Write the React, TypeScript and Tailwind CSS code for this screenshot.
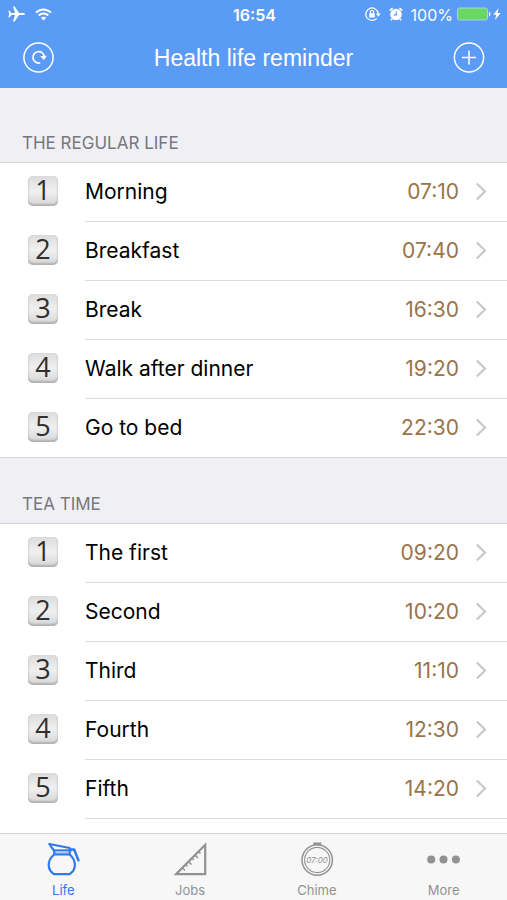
import { useState } from 'react';
import type { ReactNode } from 'react';
import clsx from 'clsx';

interface Reminder {
  name: string;
  time: string;
}

interface Section {
  title: string;
  reminders: Reminder[];
}

const SECTIONS: Section[] = [
  {
    title: 'THE REGULAR LIFE',
    reminders: [
      { name: 'Morning', time: '07:10' },
      { name: 'Breakfast', time: '07:40' },
      { name: 'Break', time: '16:30' },
      { name: 'Walk after dinner', time: '19:20' },
      { name: 'Go to bed', time: '22:30' },
    ],
  },
  {
    title: 'TEA TIME',
    reminders: [
      { name: 'The first', time: '09:20' },
      { name: 'Second', time: '10:20' },
      { name: 'Third', time: '11:10' },
      { name: 'Fourth', time: '12:30' },
      { name: 'Fifth', time: '14:20' },
    ],
  },
];

function PlaneIcon() {
  return (
    <svg width="17" height="16" viewBox="0 0 17 16" fill="currentColor" aria-hidden="true">
      <path d="M17 8c0 .7-.9 1.1-2 1.1h-4L6.700 15.500H5l2-6.400H3.300L1.700 11.200H.3L1.200 8 .3 4.800h1.400l1.600 2.100H7L5 .5h1.700L11 6.900h4c1.100 0 2 .4 2 1.100z" />
    </svg>
  );
}

function WifiIcon() {
  return (
    <svg width="17" height="13" viewBox="0 0 17 13" fill="none" stroke="currentColor" strokeWidth="2" aria-hidden="true">
      <path d="M1 4.600C5.200.3 11.800.3 16 4.600" />
      <path d="M3.700 7.500c2.700-2.700 6.900-2.700 9.600 0" />
      <path d="M8.500 12.500L5.800 9.800c1.500-1.400 3.900-1.400 5.400 0z" fill="currentColor" stroke="none" />
    </svg>
  );
}

function RotationLockIcon() {
  return (
    <svg width="16" height="14" viewBox="0 0 16 14" fill="none" stroke="currentColor" aria-hidden="true">
      <path d="M11.700 11.300A6.200 6.200 0 1 1 13.200 6.500" strokeWidth="1.200" />
      <path d="M10.800 6.500h5l-2.500 3.200z" fill="currentColor" stroke="none" />
      <rect x="4.200" y="6.200" width="5.600" height="4.200" rx=".5" fill="currentColor" stroke="none" />
      <path d="M5.400 6.500V5a1.600 1.600 0 0 1 3.200 0v1.500" strokeWidth="1.100" />
    </svg>
  );
}

function AlarmIcon() {
  return (
    <svg width="14" height="14" viewBox="0 0 14 14" aria-hidden="true">
      <circle cx="7" cy="7.500" r="5.800" fill="currentColor" />
      <path d="M.8 3.600L3.600 1.100M13.200 3.600L10.400 1.100M3 12l-1 1.300M11 12l1 1.300" stroke="currentColor" strokeWidth="1.700" />
      <path d="M7.300 4.400v3.500H4.700" fill="none" stroke="#5a9bf5" strokeWidth="1.100" />
    </svg>
  );
}

function BatteryIcon() {
  return (
    <svg width="34" height="14" viewBox="0 0 34 14" aria-hidden="true">
      <rect x=".5" y="1" width="30" height="12" rx="2" fill="#68d763" stroke="#a9d3e8" />
      <path d="M32 4.700c1.900.6 1.900 4 0 4.600z" fill="#fff" />
    </svg>
  );
}

function BoltIcon() {
  return (
    <svg width="8" height="12" viewBox="0 0 8 12" fill="currentColor" aria-hidden="true">
      <path d="M5.600 0L.3 6.700h3L2 12l5.700-7H4.500z" />
    </svg>
  );
}

function StatusBar() {
  return (
    <div className="grid h-7 grid-cols-[1fr_auto_1fr] items-center pl-2 pr-1.5">
      <div className="flex items-center gap-2.5">
        <PlaneIcon />
        <WifiIcon />
      </div>
      <span className="pt-px text-base font-semibold">16:54</span>
      <div className="flex items-center justify-end">
        <RotationLockIcon />
        <span className="ml-2 flex">
          <AlarmIcon />
        </span>
        <span className="ml-2 mr-1 pt-px text-base">100%</span>
        <BatteryIcon />
        <span className="ml-0.5">
          <BoltIcon />
        </span>
      </div>
    </div>
  );
}

function NavBar() {
  return (
    <div className="flex h-15 items-center justify-between px-[22px]">
      <button type="button" aria-label="Refresh" className="cursor-pointer">
        <svg width="32" height="32" viewBox="0 0 32 32" fill="none" stroke="currentColor">
          <circle cx="16.500" cy="15.500" r="14.600" strokeWidth="1.500" />
          <path d="M18.300 20.800A5.700 5.700 0 1 1 22.300 14.500" strokeWidth="1.700" />
          <path d="M18.200 14.200l6.600-.4-2.800 4.300z" fill="currentColor" stroke="none" />
        </svg>
      </button>
      <h1 className="font-['Liberation_Sans',sans-serif] text-[23px]">Health life reminder</h1>
      <button type="button" aria-label="Add reminder" className="cursor-pointer">
        <svg width="32" height="32" viewBox="0 0 32 32" fill="none" stroke="currentColor" strokeWidth="1.500">
          <circle cx="16" cy="15.500" r="14.600" />
          <path d="M16 8.500v14M9 15.500h14" />
        </svg>
      </button>
    </div>
  );
}

function NumberKey({ value }: { value: number }) {
  return (
    <span className="flex h-[30px] w-[30px] justify-center rounded-[5px] bg-linear-to-b from-[#dcdcdc] via-[#f0f0f0] to-[#d6d6d6] font-['Open_Sans',sans-serif] text-[27px] leading-7 text-[#303030] shadow-[inset_0_-2px_2px_#b0b0b0,inset_0_0_2px_#d0d0d0]">
      {value}
    </span>
  );
}

function ReminderRow({ index, reminder }: { index: number; reminder: Reminder }) {
  return (
    <li>
      <button type="button" className="flex w-full cursor-pointer items-stretch pl-7 text-left">
        <span className="flex w-[57px] items-center pb-1">
          <NumberKey value={index} />
        </span>
        <span className="flex h-[59px] flex-1 items-center border-b border-[#dcdce0] pr-5 text-[21px]">
          <span className="flex-1 text-black">{reminder.name}</span>
          <span className="text-[#9a7348]">{reminder.time}</span>
          <svg className="ml-4" width="12" height="20" viewBox="0 0 12 20" fill="none" stroke="#c7c7cc" strokeWidth="2.200" aria-hidden="true">
            <path d="M1.800 1.500L10 9.500l-8.200 8" />
          </svg>
        </span>
      </button>
    </li>
  );
}

function PotIcon() {
  return (
    <svg width="34" height="34" viewBox="0 0 34 34" fill="none" stroke="currentColor" strokeWidth="2.200" strokeLinejoin="round" aria-hidden="true">
      <path d="M8 8.500h15.500v4H8z" fill="#a9c8fa" stroke="none" />
      <path d="M3.300 2L23.700 6v6.500H8.200V8.400L6 6z" />
      <path d="M8.200 8.200h15.500" strokeWidth="1.700" />
      <path d="M8.200 12.500C4.500 15.500 2.700 19 2.700 23c0 3.800 2 6.900 5.300 9.200h15.600c3.300-2.300 5.300-5.400 5.300-9.200 0-4-1.800-7.500-5.200-10.500" />
      <path d="M25 9.300V7.500h3.200l4.600 11.800" strokeWidth="2.400" />
    </svg>
  );
}

function SetSquareIcon() {
  return (
    <svg width="34" height="34" viewBox="0 0 34 34" fill="none" stroke="currentColor" strokeWidth="2.200" aria-hidden="true">
      <path d="M32.200 2.800v29.400H3z" />
      <path d="M9 25.500l3 3M12.500 22.500l2 2M15.500 19.500l3 3M18.800 16l2 2M22 13l3 3M25.500 9.500l2 2" strokeWidth="1.500" />
    </svg>
  );
}

function StopwatchIcon() {
  return (
    <svg width="34" height="34" viewBox="0 0 34 34" fill="none" stroke="currentColor" aria-hidden="true">
      <path d="M14 3.200V1.300h6.500v1.900" fill="currentColor" strokeWidth="1.500" />
      <circle cx="17.200" cy="18" r="15.200" strokeWidth="1.500" />
      <circle cx="17.200" cy="18" r="12.600" strokeWidth="1.100" />
      <text x="17" y="21" textAnchor="middle" fontSize="8" fontStyle="italic" fill="currentColor" stroke="none">
        07:00
      </text>
    </svg>
  );
}

function MoreIcon() {
  return (
    <svg width="34" height="34" viewBox="0 0 34 34" fill="currentColor" aria-hidden="true">
      <circle cx="4.200" cy="17.500" r="4" />
      <circle cx="16.500" cy="17.500" r="4" />
      <circle cx="28.900" cy="17.500" r="4" />
    </svg>
  );
}

const TABS: { label: string; icon: ReactNode }[] = [
  { label: 'Life', icon: <PotIcon /> },
  { label: 'Jobs', icon: <SetSquareIcon /> },
  { label: 'Chime', icon: <StopwatchIcon /> },
  { label: 'More', icon: <MoreIcon /> },
];

export default function App() {
  const [activeTab, setActiveTab] = useState('Life');

  return (
    <div className="flex h-screen flex-col bg-white font-[Inter,sans-serif]">
      <header className="bg-[#5a9bf5] text-white">
        <StatusBar />
        <NavBar />
      </header>

      <main className="flex-1 overflow-hidden">
        {SECTIONS.map((section, i) => (
          <section key={section.title}>
            {/* later headings sit over the last row's inset line */}
            <h2
              className={clsx(
                'relative border-b border-[#d4d4d8] bg-[#efeff4] px-[22px] pb-[7px] text-[17px] leading-6 text-[#77777c]',
                i === 0 ? 'pt-[43px]' : '-mt-px border-t pt-[34px]'
              )}
            >
              {section.title}
            </h2>
            <ul>
              {section.reminders.map((reminder, j) => (
                <ReminderRow key={reminder.name} index={j + 1} reminder={reminder} />
              ))}
            </ul>
          </section>
        ))}
      </main>

      {/* Bottom tabs */}
      <nav className="grid h-[67px] grid-cols-4 border-t border-[#d0d0d0] bg-[#f7f7f7]">
        {TABS.map((tab) => (
          <button
            key={tab.label}
            type="button"
            onClick={() => setActiveTab(tab.label)}
            className={clsx(
              'flex cursor-pointer flex-col items-center pt-2 text-[13px] leading-5',
              activeTab === tab.label ? 'text-[#2f78ee]' : 'text-[#929292]'
            )}
          >
            {tab.icon}
            <span className="pt-1">{tab.label}</span>
          </button>
        ))}
      </nav>
    </div>
  );
}
